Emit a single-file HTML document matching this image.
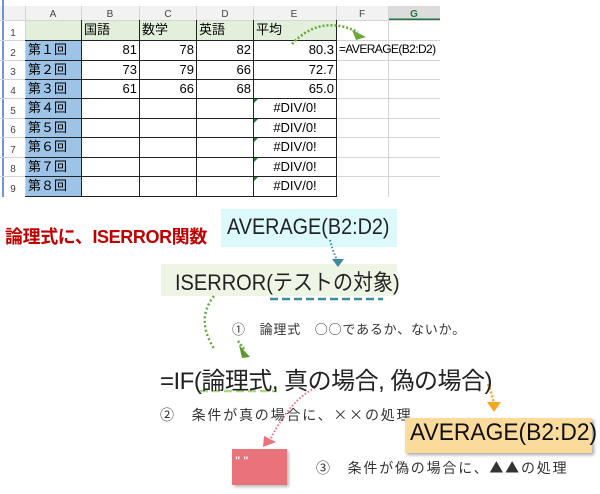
<!DOCTYPE html>
<html><head><meta charset="utf-8"><style>
body{margin:0;width:600px;height:494px;background:#fff;position:relative;overflow:hidden;font-family:"Liberation Sans","Noto Sans CJK JP",sans-serif;}
.a{position:absolute;white-space:nowrap}
.j{font-family:"Noto Sans CJK JP",sans-serif}
.c{position:absolute;box-sizing:border-box;font-size:13px;line-height:19px;color:#000}
</style></head><body>
<svg class="a" style="left:0;top:0" width="600" height="200">
<rect x="0" y="6" width="440" height="14" fill="#f2f2f2"/>
<rect x="388" y="6" width="52" height="14" fill="#dcdcdc"/>
<line x1="388" y1="19.5" x2="440" y2="19.5" stroke="#217346" stroke-width="2"/>
<rect x="25" y="20" width="311" height="20" fill="#e2efda"/>
<rect x="25" y="40" width="56" height="157" fill="#9dc3e6"/>
<line x1="3" y1="0" x2="3" y2="197" stroke="#4472c4" stroke-width="1.5"/>
<g stroke="#d4d4d4" stroke-width="1">
<line x1="0" y1="20.5" x2="440" y2="20.5"/>
<line x1="336" y1="40.5" x2="440" y2="40.5"/><line x1="336" y1="60.5" x2="440" y2="60.5"/><line x1="336" y1="79.5" x2="440" y2="79.5"/><line x1="336" y1="98.5" x2="440" y2="98.5"/><line x1="336" y1="118.5" x2="440" y2="118.5"/><line x1="336" y1="137.5" x2="440" y2="137.5"/><line x1="336" y1="157.5" x2="440" y2="157.5"/><line x1="336" y1="176.5" x2="440" y2="176.5"/>
<line x1="0" y1="40.5" x2="25" y2="40.5"/><line x1="0" y1="60.5" x2="25" y2="60.5"/><line x1="0" y1="79.5" x2="25" y2="79.5"/><line x1="0" y1="98.5" x2="25" y2="98.5"/><line x1="0" y1="118.5" x2="25" y2="118.5"/><line x1="0" y1="137.5" x2="25" y2="137.5"/><line x1="0" y1="157.5" x2="25" y2="157.5"/><line x1="0" y1="176.5" x2="25" y2="176.5"/>
<line x1="25.5" y1="6" x2="25.5" y2="197"/><line x1="81.5" y1="6" x2="81.5" y2="20"/><line x1="139.5" y1="6" x2="139.5" y2="20"/><line x1="196.5" y1="6" x2="196.5" y2="20"/><line x1="253.5" y1="6" x2="253.5" y2="20"/><line x1="336.5" y1="6" x2="336.5" y2="20"/><line x1="388.5" y1="6" x2="388.5" y2="197"/>
</g>
<g stroke="#222" stroke-width="1">
<line x1="25" y1="40.5" x2="336" y2="40.5"/><line x1="25" y1="60.5" x2="336" y2="60.5"/><line x1="25" y1="79.5" x2="336" y2="79.5"/><line x1="25" y1="98.5" x2="336" y2="98.5"/><line x1="25" y1="118.5" x2="336" y2="118.5"/><line x1="25" y1="137.5" x2="336" y2="137.5"/><line x1="25" y1="157.5" x2="336" y2="157.5"/><line x1="25" y1="176.5" x2="336" y2="176.5"/><line x1="25" y1="196.5" x2="336" y2="196.5"/>
<line x1="81.5" y1="20" x2="81.5" y2="197"/><line x1="139.5" y1="20" x2="139.5" y2="197"/><line x1="196.5" y1="20" x2="196.5" y2="197"/><line x1="253.5" y1="20" x2="253.5" y2="197"/><line x1="336.5" y1="20" x2="336.5" y2="197"/>
</g>
<g fill="#1e7d32"><path d="M254 99h4l-4 4z"/><path d="M254 119h4l-4 4z"/><path d="M254 138h4l-4 4z"/><path d="M254 158h4l-4 4z"/><path d="M254 177h4l-4 4z"/></g>
<path d="M292 44 Q320 14 358 32" fill="none" stroke="#6aa83a" stroke-width="2.5" stroke-dasharray="2 2"/>
<path d="M352 30 L366 37 L356 40 Z" fill="#6aa83a"/>
<g font-size="10" fill="#444" font-family="Liberation Sans" text-anchor="middle">
<text x="53" y="17">A</text><text x="110" y="17">B</text><text x="168" y="17">C</text><text x="225" y="17">D</text><text x="294" y="17">E</text><text x="362" y="17">F</text><text x="414" y="17" font-weight="bold" fill="#217346">G</text>
<text x="13" y="36">1</text><text x="13" y="56">2</text><text x="13" y="75">3</text><text x="13" y="94">4</text><text x="13" y="114">5</text><text x="13" y="133">6</text><text x="13" y="153">7</text><text x="13" y="172">8</text><text x="13" y="192">9</text>
</g>
</svg>
<div class="c" style="left:84px;top:20px">国語</div><div class="c" style="left:142px;top:20px">数学</div><div class="c" style="left:199px;top:20px">英語</div><div class="c" style="left:256px;top:20px">平均</div>
<div class="c" style="left:28px;top:40px">第１回</div><div class="c" style="left:28px;top:60px">第２回</div><div class="c" style="left:28px;top:79px">第３回</div><div class="c" style="left:28px;top:98px">第４回</div><div class="c" style="left:28px;top:118px">第５回</div><div class="c" style="left:28px;top:137px">第６回</div><div class="c" style="left:28px;top:157px">第７回</div><div class="c" style="left:28px;top:176px">第８回</div>
<div class="c" style="left:82px;width:55px;text-align:right;top:40px">81</div><div class="c" style="left:140px;width:54px;text-align:right;top:40px">78</div><div class="c" style="left:197px;width:54px;text-align:right;top:40px">82</div><div class="c" style="left:254px;width:80px;text-align:right;top:40px">80.3</div>
<div class="c" style="left:82px;width:55px;text-align:right;top:60px">73</div><div class="c" style="left:140px;width:54px;text-align:right;top:60px">79</div><div class="c" style="left:197px;width:54px;text-align:right;top:60px">66</div><div class="c" style="left:254px;width:80px;text-align:right;top:60px">72.7</div>
<div class="c" style="left:82px;width:55px;text-align:right;top:79px">61</div><div class="c" style="left:140px;width:54px;text-align:right;top:79px">66</div><div class="c" style="left:197px;width:54px;text-align:right;top:79px">68</div><div class="c" style="left:254px;width:80px;text-align:right;top:79px">65.0</div>
<div class="c" style="left:254px;width:82px;text-align:center;top:98px">#DIV/0!</div><div class="c" style="left:254px;width:82px;text-align:center;top:118px">#DIV/0!</div><div class="c" style="left:254px;width:82px;text-align:center;top:137px">#DIV/0!</div><div class="c" style="left:254px;width:82px;text-align:center;top:157px">#DIV/0!</div><div class="c" style="left:254px;width:82px;text-align:center;top:176px">#DIV/0!</div>
<div class="c" style="left:339px;top:40px;font-size:12px;letter-spacing:-0.6px">=AVERAGE(B2:D2)</div>

<div class="a" style="left:5px;top:223px;font-size:18px;font-weight:bold;color:#c00000;letter-spacing:-0.4px">論理式に、ISERROR関数</div>
<div class="a" style="left:221px;top:209px;width:176px;height:38px;background:#dcfafc"></div>
<div class="a" style="left:227px;top:214px;font-size:22px;color:#222;transform:scaleX(0.9);transform-origin:0 0">AVERAGE(B2:D2)</div>
<div class="a" style="left:161px;top:264px;width:236px;height:32px;background:#eef5e5"></div>
<div class="a" style="left:175px;top:265px;font-size:22px;color:#222;transform:scaleX(0.91);transform-origin:0 0">ISERROR(テストの対象)</div>
<svg class="a" style="left:0;top:0" width="600" height="494">
<path d="M330 240 Q333 252 338 262" fill="none" stroke="#3a8aa0" stroke-width="2" stroke-dasharray="1.5 2"/>
<path d="M332 259 L344 259 L338 267 Z" fill="#3a8aa0"/>
<line x1="270" y1="299" x2="383" y2="299" stroke="#3a8aa0" stroke-width="2.5" stroke-dasharray="8 4"/>
<path d="M214 296 Q195 320 215 350" fill="none" stroke="#6aa83a" stroke-width="2.5" stroke-dasharray="2 2.5"/>
<path d="M239 345 L250 357 L242 358 Z" fill="#5a9a2a"/>
<path d="M238 341 L245 350" stroke="#6aa83a" stroke-width="2.5" stroke-dasharray="2 2"/>
<line x1="200" y1="391" x2="277" y2="391" stroke="#a8d888" stroke-width="2.5" stroke-dasharray="8 4"/>
<path d="M315 388 Q290 400 270 440" fill="none" stroke="#e9737a" stroke-width="2" stroke-dasharray="1.5 2"/>
<path d="M264 436 L276 442 L263 447 Z" fill="#e9737a"/>
<path d="M488 384 Q492 394 494 404" fill="none" stroke="#f5a623" stroke-width="2.5" stroke-dasharray="2 2"/>
<path d="M487 402 L501 402 L494 412 Z" fill="#f5a623"/>
</svg>
<div class="a j" style="left:232px;top:319px;font-size:13px;color:#333;letter-spacing:0.8px">①　論理式　○○であるか、ないか。</div>
<div class="a" style="left:160px;top:361px;font-size:24px;color:#222;letter-spacing:-0.5px">=IF(論理式, 真の場合, 偽の場合)</div>
<div class="a j" style="left:160px;top:405px;font-size:14px;color:#333;letter-spacing:1.8px">②　条件が真の場合に、××の処理</div>
<div class="a" style="left:405px;top:418px;width:187px;height:35px;background:#fbdb9c;box-shadow:2px 2px 3px #aaa"></div>
<div class="a" style="left:410px;top:419px;font-size:24px;color:#111;transform:scaleX(0.95);transform-origin:0 0">AVERAGE(B2:D2)</div>
<div class="a" style="left:232px;top:449px;width:55px;height:36px;background:#e9737a;box-shadow:2px 2px 3px #bbb"></div>
<div class="a" style="left:235px;top:455px;font-size:11px;color:#fff;font-weight:bold">" "</div>
<div class="a j" style="left:316px;top:458px;font-size:14px;color:#333;letter-spacing:1.8px">③　条件が偽の場合に、▲▲の処理</div>
</body></html>
